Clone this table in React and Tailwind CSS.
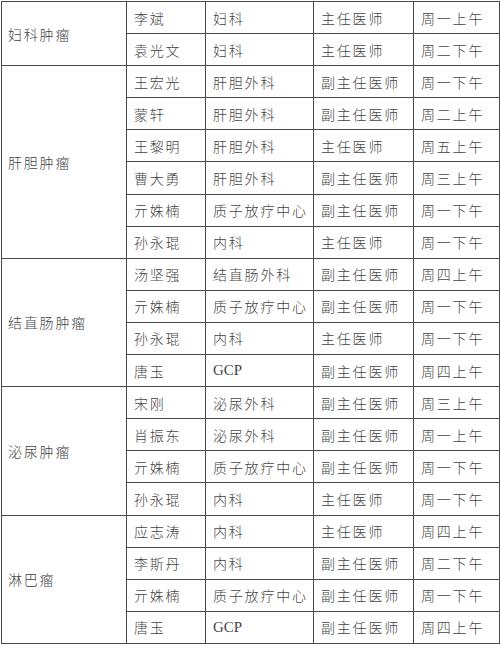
import React from 'react';

const groups = [
  {
    name: '妇科肿瘤',
    rows: [
      ['李斌', '妇科', '主任医师', '周一上午'],
      ['袁光文', '妇科', '主任医师', '周二下午'],
    ],
  },
  {
    name: '肝胆肿瘤',
    rows: [
      ['王宏光', '肝胆外科', '副主任医师', '周一下午'],
      ['蒙轩', '肝胆外科', '副主任医师', '周二上午'],
      ['王黎明', '肝胆外科', '主任医师', '周五上午'],
      ['曹大勇', '肝胆外科', '副主任医师', '周三上午'],
      ['亓姝楠', '质子放疗中心', '副主任医师', '周一下午'],
      ['孙永琨', '内科', '主任医师', '周一下午'],
    ],
  },
  {
    name: '结直肠肿瘤',
    rows: [
      ['汤坚强', '结直肠外科', '副主任医师', '周四上午'],
      ['亓姝楠', '质子放疗中心', '副主任医师', '周一下午'],
      ['孙永琨', '内科', '主任医师', '周一下午'],
      ['唐玉', 'GCP', '副主任医师', '周四上午'],
    ],
  },
  {
    name: '泌尿肿瘤',
    rows: [
      ['宋刚', '泌尿外科', '副主任医师', '周三上午'],
      ['肖振东', '泌尿外科', '副主任医师', '周一上午'],
      ['亓姝楠', '质子放疗中心', '副主任医师', '周一下午'],
      ['孙永琨', '内科', '主任医师', '周一下午'],
    ],
  },
  {
    name: '淋巴瘤',
    rows: [
      ['应志涛', '内科', '主任医师', '周四上午'],
      ['李斯丹', '内科', '副主任医师', '周二下午'],
      ['亓姝楠', '质子放疗中心', '副主任医师', '周一下午'],
      ['唐玉', 'GCP', '副主任医师', '周四上午'],
    ],
  },
];

const cell = 'border border-[#4a4a4a] pl-[7px] pr-0 whitespace-nowrap';

const App = () => {
  return (
    <div className="w-[500px] h-[647px] bg-white pt-px pl-px">
      <table
        className="table-fixed border-collapse w-[498px] text-[14px] tracking-[1.8px] text-[#444] font-light leading-none"
        style={{ fontFamily: '"Noto Sans CJK SC", "Noto Sans", sans-serif' }}
      >
        <colgroup>
          <col className="w-[125px]" />
          <col className="w-[79px]" />
          <col className="w-[108px]" />
          <col className="w-[100px]" />
          <col className="w-[86px]" />
        </colgroup>
        <tbody>
          {groups.map((g) =>
            g.rows.map((r, i) => (
              <tr key={g.name + i} className="h-[32.1px]">
                {i === 0 && (
                  <td rowSpan={g.rows.length} className={cell + ' !pl-[6px]'}>
                    {g.name}
                  </td>
                )}
                <td className={cell}>{r[0]}</td>
                <td
                  className={cell + (r[1] === 'GCP' ? ' tracking-normal text-[15px]' : '')}
                  style={r[1] === 'GCP' ? { fontFamily: '"Liberation Serif", serif' } : undefined}
                >
                  {r[1]}
                </td>
                <td className={cell}>{r[2]}</td>
                <td className={cell}>{r[3]}</td>
              </tr>
            ))
          )}
        </tbody>
      </table>
    </div>
  );
};

export default App;
